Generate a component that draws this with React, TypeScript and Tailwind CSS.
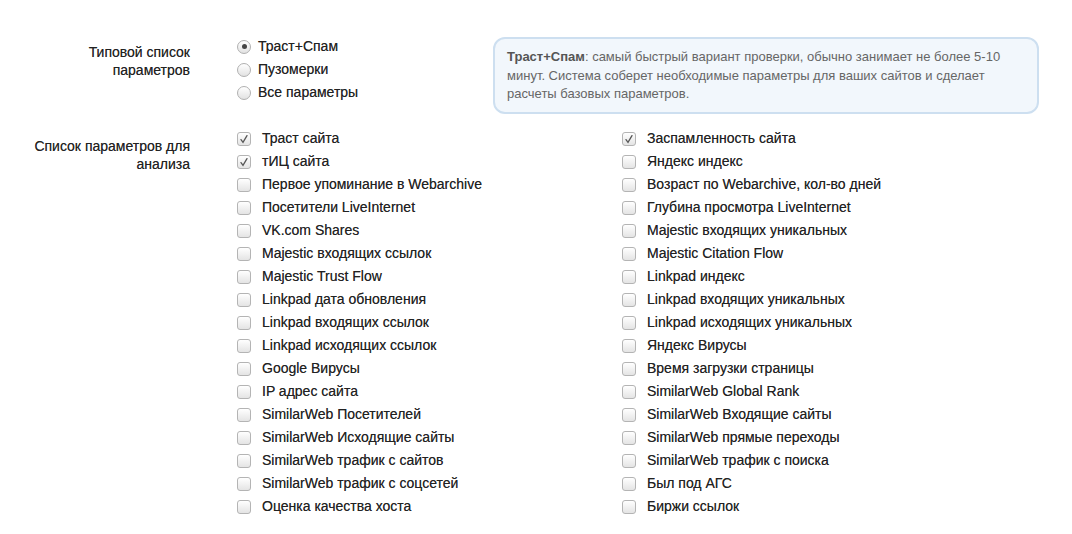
import type { ReactNode } from "react";

const LEFT = [
  { label: "Траст сайта", checked: true },
  { label: "тИЦ сайта", checked: true },
  { label: "Первое упоминание в Webarchive" },
  { label: "Посетители LiveInternet" },
  { label: "VK.com Shares" },
  { label: "Majestic входящих ссылок" },
  { label: "Majestic Trust Flow" },
  { label: "Linkpad дата обновления" },
  { label: "Linkpad входящих ссылок" },
  { label: "Linkpad исходящих ссылок" },
  { label: "Google Вирусы" },
  { label: "IP адрес сайта" },
  { label: "SimilarWeb Посетителей" },
  { label: "SimilarWeb Исходящие сайты" },
  { label: "SimilarWeb трафик с сайтов" },
  { label: "SimilarWeb трафик с соцсетей" },
  { label: "Оценка качества хоста" },
];

const RIGHT = [
  { label: "Заспамленность сайта", checked: true },
  { label: "Яндекс индекс" },
  { label: "Возраст по Webarchive, кол-во дней" },
  { label: "Глубина просмотра LiveInternet" },
  { label: "Majestic входящих уникальных" },
  { label: "Majestic Citation Flow" },
  { label: "Linkpad индекс" },
  { label: "Linkpad входящих уникальных" },
  { label: "Linkpad исходящих уникальных" },
  { label: "Яндекс Вирусы" },
  { label: "Время загрузки страницы" },
  { label: "SimilarWeb Global Rank" },
  { label: "SimilarWeb Входящие сайты" },
  { label: "SimilarWeb прямые переходы" },
  { label: "SimilarWeb трафик с поиска" },
  { label: "Был под АГС" },
  { label: "Биржи ссылок" },
];

const RADIOS = ["Траст+Спам", "Пузомерки", "Все параметры"];

function Radio({ checked, children }: { checked?: boolean; children: ReactNode }) {
  return (
    <label className="flex h-[23px] items-center">
      <span className="flex h-[14px] w-[14px] items-center justify-center rounded-full border border-[#b0b0b0] bg-gradient-to-b from-white to-[#e2e2e2]">
        {checked ? <span className="h-[5px] w-[5px] rounded-full bg-[#444]" /> : null}
      </span>
      <span className="ml-[7px] text-[14px] text-[#222]">{children}</span>
    </label>
  );
}

function Checkbox({ checked, children }: { checked?: boolean; children: ReactNode }) {
  return (
    <label className="flex h-[23px] items-center">
      <span className="flex h-[14px] w-[14px] items-center justify-center rounded-[3px] border border-[#b4b4b4] bg-gradient-to-b from-white to-[#e4e4e4]">
        {checked ? (
          <svg width="10" height="10" viewBox="0 0 10 10" fill="none">
            <path d="M2 5.6 L4 8.3 L8 1.6" stroke="#555" strokeWidth="1.3" strokeLinecap="round" />
          </svg>
        ) : null}
      </span>
      <span className="ml-[11px] text-[14px] text-[#222]">{children}</span>
    </label>
  );
}

export default function App() {
  return (
    <div className="min-h-[534px] w-[1072px] bg-white pt-[35px] font-['Liberation_Sans',Arial,sans-serif] text-[#222] [text-shadow:0_0_0.5px_rgba(0,0,0,0.5)]">
      {/* Preset selector */}
      <section className="flex items-start">
        <div className="w-[190px] pt-[8px] text-right text-[14px] leading-[18px]">
          Типовой список
          <br />
          параметров
        </div>
        <div className="ml-[47px] w-[256px]">
          {RADIOS.map((r, i) => (
            <Radio key={r} checked={i === 0}>
              {r}
            </Radio>
          ))}
        </div>
        <div className="mt-[2px] h-[77px] w-[546px] rounded-[12px] border-2 border-[#cddff0] bg-[#f2f7fc] px-[12px] pt-[9px] text-[13px] leading-[18.5px] text-[#666] [text-shadow:none]">
          <b className="text-[#555]">Траст+Спам</b>: самый быстрый вариант проверки, обычно занимает не более 5-10
          <br />
          минут. Система соберет необходимые параметры для ваших сайтов и сделает
          <br />
          расчеты базовых параметров.
        </div>
      </section>

      {/* Parameter list */}
      <section className="mt-[13px] flex items-start">
        <div className="w-[190px] pt-[10px] text-right text-[14px] leading-[18px]">
          Список параметров для
          <br />
          анализа
        </div>
        <div className="ml-[47px] grid w-[770px] grid-cols-2">
          <div>
            {LEFT.map((p) => (
              <Checkbox key={p.label} checked={p.checked}>
                {p.label}
              </Checkbox>
            ))}
          </div>
          <div>
            {RIGHT.map((p) => (
              <Checkbox key={p.label} checked={p.checked}>
                {p.label}
              </Checkbox>
            ))}
          </div>
        </div>
      </section>
    </div>
  );
}
